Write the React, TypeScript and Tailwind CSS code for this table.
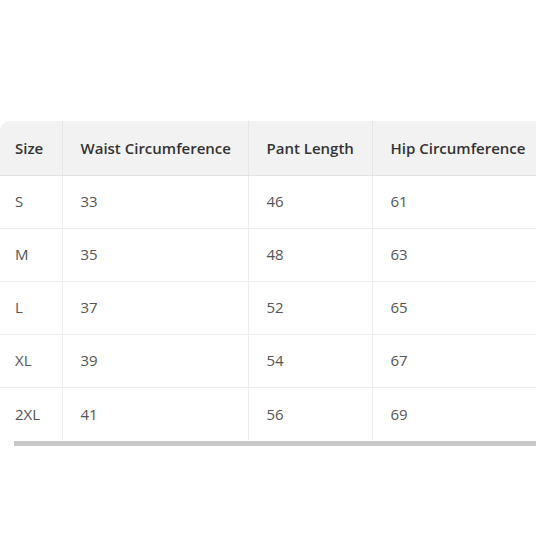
import React from 'react';

const rows = [
  ['S', '33', '46', '61'],
  ['M', '35', '48', '63'],
  ['L', '37', '52', '65'],
  ['XL', '39', '54', '67'],
  ['2XL', '41', '56', '69'],
];

const headers = ['Size', 'Waist Circumference', 'Pant Length', 'Hip Circumference'];
const widths = ['w-[62px]', 'w-[186px]', 'w-[124px]', 'w-[180px]'];

export default function App() {
  return (
    <div className="w-[536px] h-[536px] bg-white pt-[121px] overflow-hidden" style={{ fontFamily: '"Open Sans", "Noto Sans", sans-serif' }}>
      <div className="w-[536px] overflow-hidden">
        <table className="w-[552px] table-fixed border-collapse text-[15px]">
          <thead>
            <tr className="h-[54px] bg-[#f2f2f2]">
              {headers.map((h, i) => (
                <th
                  key={h}
                  className={`${widths[i]} text-left font-semibold text-[#333] pl-[15px] pr-2 whitespace-nowrap border-b border-[#e3e3e3] ${i > 0 ? 'border-l border-l-[#e6e6e6] pl-[18px]' : 'rounded-tl-[10px]'}`}
                >
                  {h}
                </th>
              ))}
            </tr>
          </thead>
          <tbody>
            {rows.map((r) => (
              <tr key={r[0]} className="h-[53px] border-b border-[#ececec] last:border-b-0">
                {r.map((c, i) => (
                  <td
                    key={i}
                    className={`text-[#555] whitespace-nowrap ${i > 0 ? 'border-l border-[#ececec] pl-[18px]' : 'pl-[15px]'}`}
                  >
                    {c}
                  </td>
                ))}
              </tr>
            ))}
          </tbody>
        </table>
        {/* horizontal scrollbar */}
        <div className="h-[5px] mt-px ml-[14px] bg-[#c8c8c8]" />
      </div>
    </div>
  );
}
